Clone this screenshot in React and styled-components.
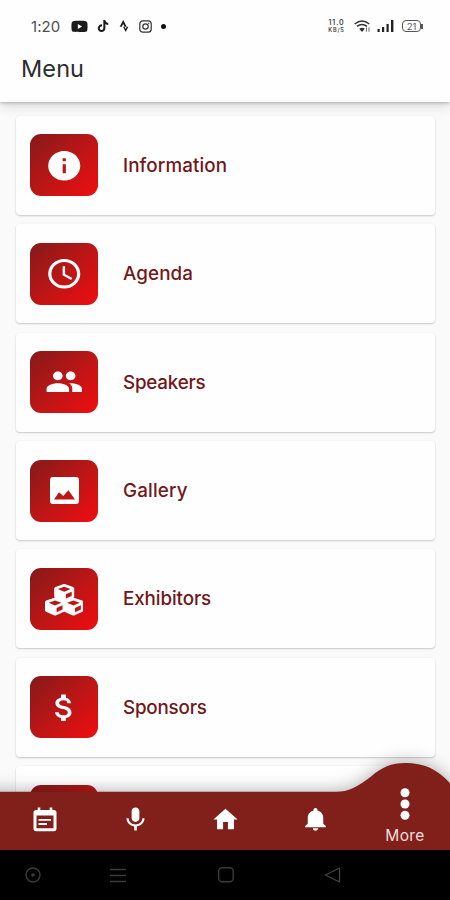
import styled, { createGlobalStyle } from "styled-components";
import {
  MdInfo,
  MdAccessTime,
  MdPeople,
  MdAttachMoney,
  MdMic,
  MdHome,
  MdNotifications,
} from "react-icons/md";
import { FaYoutube, FaTiktok, FaStrava } from "react-icons/fa";

const GlobalStyle = createGlobalStyle`
  * {
    box-sizing: border-box;
  }
  body {
    margin: 0;
    font-family: Inter, "Liberation Sans", sans-serif;
  }
`;

const Screen = styled.div`
  width: 450px;
  height: 900px;
  display: flex;
  flex-direction: column;
  overflow: hidden;
  background-color: #fafafa;
`;

const Header = styled.header`
  position: relative;
  z-index: 1;
  flex: none;
  height: 102px;
  background-color: #fefefe;
  box-shadow: 0 1px 3px rgba(0, 0, 0, 0.22), 0 3px 12px rgba(0, 0, 0, 0.16);
`;

const StatusBar = styled.div`
  display: flex;
  align-items: center;
  justify-content: space-between;
  height: 32px;
  padding: 20px 27px 0 31px;
  color: #1c1c1c;
`;

const StatusGroup = styled.div`
  display: flex;
  align-items: center;
  gap: ${(props) => props.$gap}px;
  height: 14px;
`;

const Clock = styled.span`
  width: 31px;
  font-size: 15px;
  letter-spacing: 0.1px;
  color: #505050;
`;

const Dot = styled.span`
  width: 5px;
  height: 5px;
  border-radius: 50%;
  background-color: #111;
`;

const Speed = styled.span`
  display: flex;
  flex-direction: column;
  align-items: center;
  width: 19px;
  margin-right: 2px;
  font-size: 7px;
  font-weight: 600;
  line-height: 9px;
  letter-spacing: 0.8px;
  color: #444;
`;

const SpeedUnit = styled.span`
  font-size: 5.5px;
  line-height: 7px;
`;

const Battery = styled.span`
  position: relative;
  display: flex;
  align-items: center;
  justify-content: center;
  width: 19px;
  height: 12px;
  margin: 0 2px 0 2px;
  border: 1.5px solid #555;
  border-radius: 4px;
  font-size: 9.5px;
  color: #555;

  &::after {
    content: "";
    position: absolute;
    right: -3px;
    top: 2.5px;
    width: 2px;
    height: 5px;
    background-color: #555;
  }
`;

const Title = styled.h1`
  margin: 22px 0 0 21px;
  font-size: 23.5px;
  font-weight: 400;
  line-height: 30px;
  letter-spacing: 0.1px;
  color: #2d2d2d;
`;

const List = styled.main`
  flex: 1;
  min-height: 0;
  display: flex;
  flex-direction: column;
  gap: 9.4px;
  padding: 13.9px 15px 0 16px;
  overflow: hidden;
`;

const Card = styled.div`
  flex: none;
  display: flex;
  align-items: center;
  gap: 25px;
  height: 99px;
  padding-left: 14px;
  border-radius: 4px;
  background-color: #fefefe;
  box-shadow: 0 1px 2px rgba(0, 0, 0, 0.2), 0 0 2px rgba(0, 0, 0, 0.04);
`;

const Tile = styled.div`
  display: flex;
  align-items: center;
  justify-content: center;
  width: 68px;
  height: 62px;
  border-radius: 11px;
  background: linear-gradient(137deg, #85191a 0%, #b91616 48%, #f00d10 100%);
  color: #fff;
`;

const Glyph = styled.span`
  display: flex;

  svg {
    flex: none;
    width: ${(props) => props.$width}px;
    height: ${(props) => props.$height}px;
  }
`;

const Label = styled.span`
  font-size: 18.8px;
  font-weight: 500;
  letter-spacing: ${(props) => props.$spacing || 0}px;
  color: #721719;
`;

const BottomNav = styled.nav`
  position: relative;
  z-index: 1;
  flex: none;
  display: grid;
  grid-template-columns: repeat(5, 90px);
  height: 58px;
`;

const NavShape = styled.svg`
  position: absolute;
  left: 0;
  bottom: 0;
  overflow: visible;
  filter: drop-shadow(0 -2px 8px rgba(0, 0, 0, 0.28));
`;

const NavItem = styled.div`
  position: relative;
  display: flex;
  flex-direction: column;
  align-items: center;
  justify-content: ${(props) => (props.$active ? "flex-end" : "center")};
  padding-bottom: ${(props) => (props.$active ? 5 : 4)}px;
  color: #fff;
`;

const ActiveItem = styled(NavItem)`
  justify-content: flex-end;
  padding-bottom: 5px;
  margin-top: -32px;
`;

const NavLabel = styled.span`
  margin-top: 7px;
  font-size: 15.5px;
  line-height: 18px;
  letter-spacing: 0.4px;
  color: #f5dede;
`;

const SystemBar = styled.footer`
  position: relative;
  z-index: 2;
  flex: none;
  display: grid;
  grid-template-columns: 66px 104px 112px 102px;
  place-items: center;
  height: 50px;
  background-color: #000;
`;

function InstagramIcon() {
  return (
    <svg width="13" height="13" viewBox="0 0 13 13" fill="none" stroke="#333">
      <rect x="0.8" y="0.8" width="11.4" height="11.4" rx="3" strokeWidth="1.2" />
      <circle cx="6.5" cy="6.5" r="2.7" strokeWidth="1.2" />
      <circle cx="9.7" cy="3.3" r="0.4" strokeWidth="0.8" />
    </svg>
  );
}

function WifiIcon() {
  return (
    <svg width="17" height="13" viewBox="0 0 17 13" fill="none" stroke="#333" strokeWidth="1.5">
      <path d="M0.7 4Q8 -1.8 15.3 4" />
      <path d="M3 6.4Q8 2.6 13 6.4" />
      <path d="M5.2 8.7Q8 6.8 10.8 8.7L8 12Z" fill="#333" stroke="none" />
      <path d="M12.5 7.5v4.3M15 7.5v4.3" strokeWidth="1.1" stroke="#777" />
    </svg>
  );
}

function SignalIcon() {
  return (
    <svg width="17" height="12" viewBox="0 0 17 12" fill="#222">
      <rect x="0.5" y="9" width="2.2" height="3" />
      <rect x="5" y="7" width="2.2" height="5" />
      <rect x="9.5" y="4" width="2.2" height="8" />
      <rect x="14" y="0" width="2.4" height="12" />
    </svg>
  );
}

function ImageIcon() {
  return (
    <svg viewBox="0 0 29 27">
      <path
        fill="#fff"
        fillRule="evenodd"
        d="M3 0h23a3 3 0 0 1 3 3v21a3 3 0 0 1-3 3H3a3 3 0 0 1-3-3V3a3 3 0 0 1 3-3ZM4 22.5h21L18.4 13.2L13.3 19L9 15.3Z"
      />
    </svg>
  );
}

// one cube of the stack, 20 x 18
const cubePath =
  "M8.8 0.3Q10 -0.2 11.2 0.3L18.8 3Q20 3.5 20 4.7V12.6Q20 13.6 19 14.1L11.2 17.7Q10 18.2 8.8 17.7L1 14.1Q0 13.6 0 12.6V4.7Q0 3.5 1.2 3ZM10 2.8L3.7 5.1L10 7.8L16.3 5.1ZM11.6 10.3V14.6L17.5 11.9V7.7Z";

function CubesIcon() {
  return (
    <svg viewBox="0 -3 38.4 35" fill="#fff" fillRule="evenodd">
      <path d={cubePath} transform="translate(9.2 0)" />
      <path d={cubePath} transform="translate(0 13.6)" />
      <path d={cubePath} transform="translate(18.4 13.6)" />
    </svg>
  );
}

function CalendarIcon() {
  return (
    <svg viewBox="0 0 24 25" fill="none" stroke="#fff">
      <path d="M6 0.5V5M18 0.5V5" strokeWidth="2.6" />
      <rect x="2" y="4.6" width="20" height="18.2" rx="1.2" strokeWidth="3" />
      <path d="M2 6h20" strokeWidth="5" />
      <path d="M5.5 12.8h12.5M5.5 17h8.5" strokeWidth="1.8" />
    </svg>
  );
}

function MoreIcon() {
  return (
    <svg width="10" height="32" viewBox="0 0 10 32" fill="#fff">
      <circle cx="5" cy="4.8" r="4.5" />
      <circle cx="5" cy="16" r="4.5" />
      <circle cx="5" cy="27.2" r="4.5" />
    </svg>
  );
}

const items = [
  { name: "Information", Icon: MdInfo, width: 38.5, height: 35.5, spacing: 0.1 },
  { name: "Agenda", Icon: MdAccessTime, width: 38.5, height: 35.5, spacing: 0.1 },
  { name: "Speakers", Icon: MdPeople, width: 38.5, height: 35.5, spacing: -0.2 },
  { name: "Gallery", Icon: ImageIcon, width: 29, height: 27, spacing: 0.15 },
  { name: "Exhibitors", Icon: CubesIcon, width: 38.4, height: 35, spacing: -0.1 },
  { name: "Sponsors", Icon: MdAttachMoney, width: 38.5, height: 35.5, spacing: -0.2 },
  { name: "" },
];

const tabs = [
  { id: "calendar", Icon: CalendarIcon, width: 24, height: 25 },
  { id: "mic", Icon: MdMic, width: 31, height: 29 },
  { id: "home", Icon: MdHome, width: 29, height: 29 },
  { id: "alerts", Icon: MdNotifications, width: 31, height: 28 },
];

export default function App() {
  return (
    <>
      <GlobalStyle />
      <Screen>
        <Header>
          <StatusBar>
            <StatusGroup $gap={9}>
              <Clock>1:20</Clock>
              <FaYoutube size={17} />
              <FaTiktok size={12} />
              <FaStrava size={12} />
              <InstagramIcon />
              <Dot />
            </StatusGroup>
            <StatusGroup $gap={6}>
              <Speed>
                <span>11.0</span>
                <SpeedUnit>KB/S</SpeedUnit>
              </Speed>
              <WifiIcon />
              <SignalIcon />
              <Battery>21</Battery>
            </StatusGroup>
          </StatusBar>
          <Title>Menu</Title>
        </Header>
        <List>
          {items.map(({ name, Icon, width, height, spacing }) => (
            <Card key={name}>
              <Tile>
                {Icon && (
                  <Glyph $width={width} $height={height}>
                    <Icon preserveAspectRatio="none" />
                  </Glyph>
                )}
              </Tile>
              <Label $spacing={spacing}>{name}</Label>
            </Card>
          ))}
        </List>
        <BottomNav>
          <NavShape width="450" height="87" viewBox="0 0 450 87">
            <path
              fill="#81201b"
              d="M-20 28.8H336C348 28.8 358 24 371.7 13C381 4.5 392 0 405 0C424 0 438 6 452 22.5L470 28.8V87H-20Z"
            />
          </NavShape>
          {tabs.map(({ id, Icon, width, height }) => (
            <NavItem key={id}>
              <Glyph $width={width} $height={height}>
                <Icon preserveAspectRatio="none" />
              </Glyph>
            </NavItem>
          ))}
          <ActiveItem>
            <MoreIcon />
            <NavLabel>More</NavLabel>
          </ActiveItem>
        </BottomNav>
        <SystemBar>
          <svg width="18" height="18" viewBox="0 0 18 18" fill="none" stroke="#3b3b3b">
            <circle cx="9" cy="9" r="7" strokeWidth="1.4" />
            <circle cx="9" cy="9" r="1.8" fill="#3b3b3b" stroke="none" />
          </svg>
          <svg width="18" height="16" viewBox="0 0 18 16" stroke="#3b3b3b" strokeWidth="1.3">
            <path d="M1 2.5h16M1 8.5h16M1 14.5h16" />
          </svg>
          <svg width="18" height="18" viewBox="0 0 18 18" fill="none" stroke="#3b3b3b">
            <rect x="1.6" y="1.8" width="14.6" height="14" rx="3.5" strokeWidth="1.4" />
          </svg>
          <svg width="18" height="18" viewBox="0 0 18 18" fill="none" stroke="#454545">
            <path d="M15.5 2V16L1.5 9Z" strokeWidth="1.3" strokeLinejoin="round" />
          </svg>
        </SystemBar>
      </Screen>
    </>
  );
}
